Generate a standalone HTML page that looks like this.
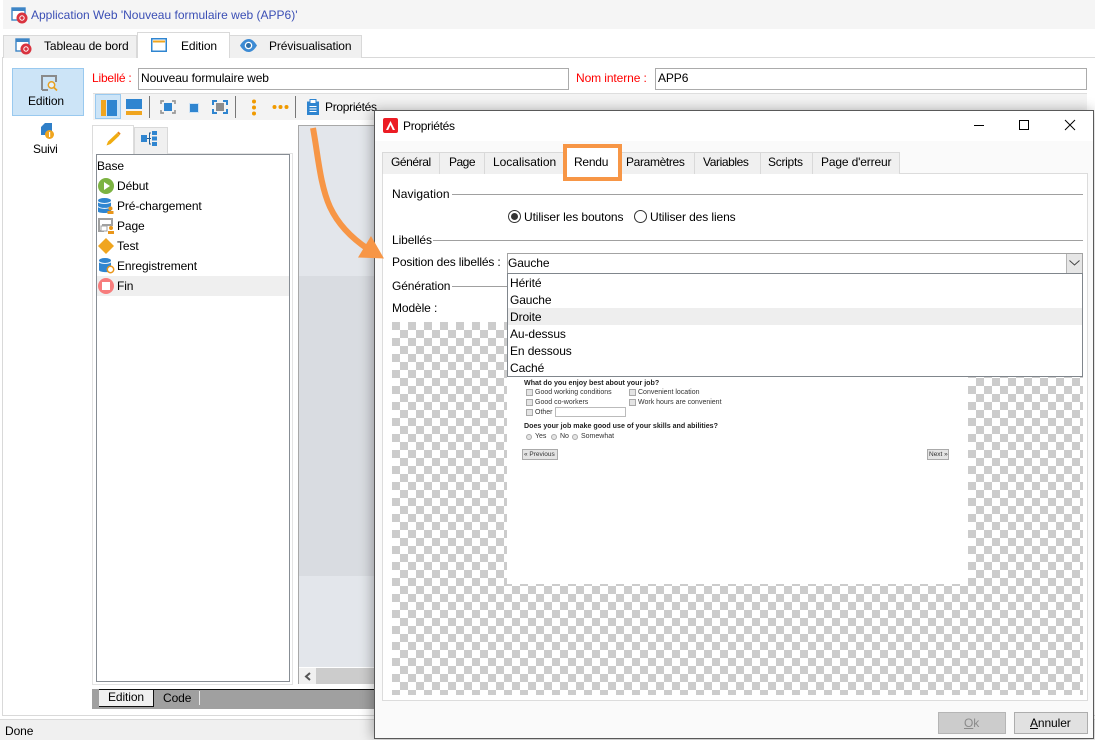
<!DOCTYPE html>
<html><head><meta charset="utf-8"><style>
*{box-sizing:border-box}
html,body{margin:0;padding:0;width:1095px;height:740px;overflow:hidden;background:#fff;font-family:"Liberation Sans",sans-serif;font-size:12px;color:#000}
.a{position:absolute}
.t{position:absolute;white-space:nowrap;line-height:16px;height:16px;letter-spacing:-.1px}
.tab{position:absolute;background:#f0f0f0;border:1px solid #d9d9d9;border-bottom:none}
.g{position:absolute;background:#a0a0a0;height:1px}
svg{position:absolute;overflow:visible}
.p{position:absolute;white-space:nowrap;font-size:7px;line-height:8px;color:#333;font-weight:400}
.b{font-weight:700;font-size:7.1px;letter-spacing:0;color:#222}
.cb{position:absolute;width:7px;height:7px;background:#e4e4e4;border:1px solid #aaa}
.rd{position:absolute;width:6px;height:6px;border-radius:50%;background:#e4e4e4;border:1px solid #aaa}
</style></head><body>

<!-- title -->
<div class="a" style="left:3px;top:0;width:1092px;height:29px;background:#f5f5f5"></div>
<svg style="left:11px;top:7px" width="17" height="16"><rect x="1" y="1" width="13" height="12" fill="#fff" stroke="#3d85c6" stroke-width="1.4"/><rect x="1" y="1" width="13" height="3" fill="#3d85c6"/><circle cx="11" cy="11" r="5.500" fill="#d9333f"/><circle cx="11" cy="11" r="2.200" fill="none" stroke="#fff"/></svg>
<div class="t" style="left:31px;top:7px;color:#3b4fb5;letter-spacing:0">Application Web 'Nouveau formulaire web (APP6)'</div>

<!-- main panel -->
<div class="a" style="left:2px;top:57px;width:1093px;height:659px;background:#fff;border:1px solid #d9d9d9;border-right:none"></div>

<!-- top tabs -->
<div class="tab" style="left:3px;top:35px;width:134px;height:23px"></div>
<div class="tab" style="left:229px;top:35px;width:133px;height:23px"></div>
<div class="tab" style="left:137px;top:32px;width:93px;height:26px;background:#fff"></div>
<svg style="left:15px;top:38px" width="17" height="16"><rect x="1" y="1" width="13" height="12" fill="#fff" stroke="#3d85c6" stroke-width="1.4"/><rect x="1" y="1" width="13" height="3" fill="#3d85c6"/><circle cx="11" cy="11" r="5.500" fill="#d9333f"/><circle cx="11" cy="11" r="2.200" fill="none" stroke="#fff"/></svg>
<div class="t" style="left:44px;top:38px">Tableau de bord</div>
<svg style="left:151px;top:38px" width="16" height="15"><rect x=".75" y=".75" width="14.5" height="12.5" fill="#fff" stroke="#2f85d0" stroke-width="1.5"/><rect x="2" y="2.500" width="12" height="2" fill="#f0a51e"/></svg>
<div class="t" style="left:181px;top:38px">Edition</div>
<svg style="left:240px;top:39px" width="17" height="13"><path d="M0 6.500C3 1.500 6 0 8.500 0S14 1.500 17 6.500C14 11.500 11 13 8.500 13S3 11.500 0 6.500Z" fill="#3d8bd4"/><circle cx="8.500" cy="6.500" r="3.800" fill="#fff"/><circle cx="8.500" cy="6.500" r="2.500" fill="#2f6fa8"/></svg>
<div class="t" style="left:269px;top:38px">Prévisualisation</div>

<!-- sidebar -->
<div class="a" style="left:12px;top:68px;width:72px;height:48px;background:#cce4f7;border:1px solid #99c9ef"></div>
<svg style="left:41px;top:75px" width="17" height="17"><path d="M1 15V1H15V7M1 15H7" fill="none" stroke="#8a8a8a" stroke-width="2"/><circle cx="10.500" cy="10" r="3.200" fill="#e6f1fa" stroke="#e8a020" stroke-width="1.500"/><path d="M13 12.500L16 15.500" stroke="#e8a020" stroke-width="1.800"/></svg>
<div class="t" style="left:28px;top:93px">Edition</div>
<svg style="left:40px;top:122px" width="15" height="17"><path d="M1 5L5 1H12V13H1Z" fill="#2f7fc8"/><circle cx="9.500" cy="12.500" r="4.500" fill="#f0a51e"/><rect x="9" y="10" width="1.200" height="5" fill="#fff"/></svg>
<div class="t" style="left:33px;top:141px;letter-spacing:-.3px">Suivi</div>

<!-- labels -->
<div class="t" style="left:92px;top:70px;color:#f00;letter-spacing:-.2px">Libellé :</div>
<div class="a" style="left:138px;top:68px;width:431px;height:22px;background:#fff;border:1px solid #ababab"></div>
<div class="t" style="left:141px;top:70px">Nouveau formulaire web</div>
<div class="t" style="left:576px;top:70px;color:#f00">Nom interne :</div>
<div class="a" style="left:655px;top:68px;width:432px;height:22px;background:#fff;border:1px solid #ababab"></div>
<div class="t" style="left:658px;top:70px">APP6</div>

<!-- toolbar -->
<div class="a" style="left:93px;top:93px;width:994px;height:27px;background:#f3f3f3;border-top:1px solid #dedede"></div>
<div class="a" style="left:95px;top:94px;width:26px;height:25px;background:#cce4f7;border:1px solid #99c9ef"></div>
<div class="a" style="left:101px;top:100px;width:5px;height:16px;background:#f0a51e"></div>
<div class="a" style="left:107px;top:100px;width:10px;height:16px;background:#2f85d0"></div>
<div class="a" style="left:126px;top:99px;width:16px;height:10px;background:#2f85d0"></div>
<div class="a" style="left:126px;top:111px;width:16px;height:4px;background:#f0a51e"></div>
<div class="a" style="left:149px;top:96px;width:1px;height:22px;background:#777"></div>
<svg style="left:160px;top:100px" width="16" height="14"><path d="M1 4V1H4M12 1H15V4M15 10V13H12M4 13H1V10" fill="none" stroke="#999" stroke-width="1.700"/><rect x="4" y="3" width="8" height="8" fill="#2f85d0"/></svg>
<div class="a" style="left:189px;top:103px;width:10px;height:10px;background:#cfe3f5"></div>
<div class="a" style="left:190px;top:104px;width:8px;height:8px;background:#2f85d0"></div>
<svg style="left:212px;top:100px" width="16" height="14"><path d="M1 5V1H5M11 1H15V5M15 9V13H11M5 13H1V9" fill="none" stroke="#2f85d0" stroke-width="2"/><rect x="4" y="3" width="8" height="8" fill="#8c8c8c"/></svg>
<div class="a" style="left:235px;top:96px;width:1px;height:22px;background:#777"></div>
<svg style="left:250px;top:99px" width="8" height="17"><circle cx="4" cy="2.500" r="2" fill="#f09a00"/><circle cx="4" cy="8.500" r="2" fill="#f09a00"/><circle cx="4" cy="14.500" r="2" fill="#f09a00"/></svg>
<svg style="left:272px;top:103px" width="17" height="8"><circle cx="2.500" cy="4" r="2" fill="#f09a00"/><circle cx="8.500" cy="4" r="2" fill="#f09a00"/><circle cx="14.500" cy="4" r="2" fill="#f09a00"/></svg>
<div class="a" style="left:295px;top:96px;width:1px;height:22px;background:#777"></div>
<svg style="left:307px;top:99px" width="12" height="16"><rect x="0" y="2.500" width="12" height="13.500" fill="#2f85d0"/><rect x="3" y=".5" width="6" height="4" fill="#fff" stroke="#2f85d0"/><path d="M2.500 7.500H9.500M2.500 10H9.500M2.500 12.500H9.500" stroke="#fff"/></svg>
<div class="t" style="left:325px;top:99px;letter-spacing:-.3px">Propriétés</div>

<!-- left tabs -->
<div class="a" style="left:92px;top:153px;width:201px;height:532px;border:1px solid #e3e3e3;background:#fff"></div>
<div class="tab" style="left:134px;top:127px;width:34px;height:27px"></div>
<div class="tab" style="left:92px;top:125px;width:42px;height:29px;background:#fff;border-color:#dcdcdc"></div>
<svg style="left:106px;top:131px" width="15" height="15"><path d="M.5 14.500L2 10.500L11 2L13.500 4.500L4.500 13Z" fill="#f0ac10"/><path d="M11.800 1.200L14 3.400" stroke="#e8851a" stroke-width="2"/></svg>
<svg style="left:141px;top:131px" width="17" height="16"><rect x="0" y="4" width="6" height="7" fill="#2f85d0"/><path d="M6 7.500H10M10 2H8.500V13H10" stroke="#235e94" fill="none"/><rect x="11" y="0" width="5" height="4" fill="#2f85d0"/><rect x="11" y="5.500" width="5" height="4" fill="#2f85d0"/><rect x="11" y="11" width="5" height="4" fill="#2f85d0"/></svg>
<div class="a" style="left:96px;top:154px;width:194px;height:528px;background:#fff;border:1px solid #878d94"></div>
<div class="a" style="left:97px;top:276px;width:192px;height:20px;background:#efefef"></div>
<div class="t" style="left:97px;top:158px">Base</div>
<svg style="left:98px;top:178px" width="16" height="16"><circle cx="8" cy="8" r="8" fill="#7cb342"/><path d="M6 4L12 8L6 12Z" fill="#fff"/></svg>
<div class="t" style="left:117px;top:178px">Début</div>
<svg style="left:98px;top:198px" width="16" height="16"><ellipse cx="6.500" cy="2.500" rx="6.500" ry="2.500" fill="#2f85d0"/><path d="M0 4V13.500C0 15.500 13 15.500 13 13.500V4C13 6.500 0 6.500 0 4Z" fill="#2f85d0"/><path d="M0 8.500C2 11 11 11 13 8.500" stroke="#fff" fill="none"/><circle cx="12.500" cy="10.500" r="2" fill="#e9961a"/><rect x="9.500" y="13" width="6" height="3" fill="#e9961a"/></svg>
<div class="t" style="left:117px;top:198px">Pré-chargement</div>
<svg style="left:98px;top:218px" width="16" height="16"><path d="M1 13V1H14V7H5V13Z" fill="#fff" stroke="#a0a0a0" stroke-width="2"/><rect x="3" y="8" width="6" height="5" fill="#fff" stroke="#a0a0a0"/><circle cx="13" cy="10" r="2" fill="#e9961a"/><rect x="10" y="13" width="6" height="3" fill="#e9961a"/></svg>
<div class="t" style="left:117px;top:218px">Page</div>
<svg style="left:98px;top:238px" width="16" height="16"><path d="M8 0L16 8L8 16L0 8Z" fill="#f0a51e"/></svg>
<div class="t" style="left:117px;top:238px">Test</div>
<svg style="left:99px;top:258px" width="16" height="16"><ellipse cx="6" cy="2.500" rx="6" ry="2.500" fill="#2f85d0"/><path d="M0 4V12C0 14 7 14.500 9 14V9H12V4C12 6.500 0 6.500 0 4Z" fill="#2f85d0"/><circle cx="11.500" cy="11.500" r="3.200" fill="#fff" stroke="#e9961a" stroke-width="1.500"/></svg>
<div class="t" style="left:117px;top:258px">Enregistrement</div>
<svg style="left:98px;top:278px" width="16" height="16"><circle cx="8" cy="8" r="8" fill="#f77c7c"/><rect x="4" y="4" width="8" height="8" fill="#fff"/></svg>
<div class="t" style="left:117px;top:278px">Fin</div>

<!-- right panel -->
<div class="a" style="left:298px;top:125px;width:80px;height:559px;background:#e3e6eb;border:1px solid #a8a8a8"></div>
<div class="a" style="left:299px;top:276px;width:78px;height:300px;background:#d9dce1"></div>
<div class="a" style="left:299px;top:667px;width:78px;height:17px;background:#ccc;border-top:1px solid #fff"></div>
<div class="a" style="left:299px;top:668px;width:17px;height:16px;background:#f0f0f0"></div>
<svg style="left:304px;top:672px" width="8" height="9"><path d="M6 1L2 4.500L6 8" fill="none" stroke="#555" stroke-width="2"/></svg>

<!-- bottom tabs -->
<div class="a" style="left:92px;top:689px;width:290px;height:20px;background:#a0a0a0"></div>
<div class="a" style="left:99px;top:689px;width:283px;height:1px;background:#111"></div>
<div class="a" style="left:99px;top:690px;width:55px;height:17px;background:#f0f0f0;border-bottom:1px solid #111;border-right:1px solid #111"></div>
<div class="t" style="left:108px;top:689px">Edition</div>
<div class="t" style="left:163px;top:690px">Code</div>
<div class="a" style="left:199px;top:691px;width:1px;height:14px;background:#e8e8e8"></div>

<!-- status -->
<div class="a" style="left:0;top:719px;width:1095px;height:21px;background:#f0f0f0;border-top:1px solid #dadada"></div>
<div class="t" style="left:5px;top:723px">Done</div>

<!-- dialog -->
<div class="a" style="left:374px;top:110px;width:720px;height:629px;background:#fff;border:1px solid #595959;box-shadow:-2px 0 12px rgba(0,0,0,.3)"></div>
<div class="a" style="left:375px;top:141px;width:718px;height:597px;background:#fafafa"></div>
<svg style="left:383px;top:118px" width="15" height="15"><rect width="15" height="15" rx="2" fill="#ec1c24"/><path d="M7.500 3L12 12H9.800L7.500 7L5.200 12H3Z" fill="#fff"/></svg>
<div class="t" style="left:403px;top:118px;letter-spacing:-.3px">Propriétés</div>
<div class="a" style="left:974px;top:125px;width:10px;height:1px;background:#000"></div>
<div class="a" style="left:1019px;top:120px;width:10px;height:10px;border:1px solid #000"></div>
<svg style="left:1065px;top:120px" width="10" height="10"><path d="M0 0L10 10M10 0L0 10" stroke="#000" stroke-width="1"/></svg>

<!-- dialog tabs -->
<div class="a" style="left:382px;top:173px;width:706px;height:528px;background:#fff;border:1px solid #dcdcdc"></div>
<div class="tab" style="left:382px;top:152px;width:58px;height:22px"></div>
<div class="tab" style="left:439px;top:152px;width:46px;height:22px"></div>
<div class="tab" style="left:484px;top:152px;width:81px;height:22px"></div>
<div class="tab" style="left:620px;top:152px;width:75px;height:22px"></div>
<div class="tab" style="left:694px;top:152px;width:67px;height:22px"></div>
<div class="tab" style="left:760px;top:152px;width:53px;height:22px"></div>
<div class="tab" style="left:812px;top:152px;width:88px;height:22px"></div>
<div class="a" style="left:565px;top:148px;width:55px;height:26px;background:#fff"></div>
<div class="a" style="left:563px;top:144px;width:59px;height:37px;border:4px solid #f79646"></div>
<div class="t" style="left:391px;top:154px;letter-spacing:-.42px">Général</div>
<div class="t" style="left:449px;top:154px;letter-spacing:-.5px">Page</div>
<div class="t" style="left:493px;top:154px;letter-spacing:-.02px">Localisation</div>
<div class="t" style="left:574px;top:154px;letter-spacing:-.25px">Rendu</div>
<div class="t" style="left:626px;top:154px;letter-spacing:-.35px">Paramètres</div>
<div class="t" style="left:703px;top:154px;letter-spacing:-.4px">Variables</div>
<div class="t" style="left:768px;top:154px;letter-spacing:-.28px">Scripts</div>
<div class="t" style="left:821px;top:154px;letter-spacing:-.15px">Page d'erreur</div>

<!-- form -->
<div class="t" style="left:392px;top:186px;letter-spacing:.1px">Navigation</div><div class="g" style="left:452px;top:194px;width:631px"></div>
<svg style="left:508px;top:210px" width="13" height="13"><circle cx="6.500" cy="6.500" r="6" fill="#fff" stroke="#333"/><circle cx="6.500" cy="6.500" r="3.500" fill="#333"/></svg>
<div class="t" style="left:524px;top:209px;letter-spacing:-.1px">Utiliser les boutons</div>
<svg style="left:634px;top:210px" width="13" height="13"><circle cx="6.500" cy="6.500" r="6" fill="#fff" stroke="#333"/></svg>
<div class="t" style="left:650px;top:209px">Utiliser des liens</div>
<div class="t" style="left:392px;top:232px">Libellés</div><div class="g" style="left:433px;top:240px;width:650px"></div>
<div class="t" style="left:392px;top:254px;letter-spacing:-.15px">Position des libellés :</div>
<div class="t" style="left:392px;top:278px">Génération</div><div class="g" style="left:452px;top:286px;width:60px"></div>
<div class="t" style="left:392px;top:300px">Modèle :</div>

<!-- checker -->
<div class="a" style="left:392px;top:322px;width:691px;height:373px;background:repeating-conic-gradient(#ccc 0 25%,#fff 0 50%) 8px 0/16px 16px"></div>
<div class="a" style="left:507px;top:320px;width:461px;height:264px;background:#fff"></div>

<!-- preview -->
<div class="p b" style="left:524px;top:379px">What do you enjoy best about your job?</div>
<div class="cb" style="left:526px;top:389px"></div><div class="p" style="left:535px;top:389px">Good working conditions</div>
<div class="cb" style="left:629px;top:389px"></div><div class="p" style="left:638px;top:389px">Convenient location</div>
<div class="cb" style="left:526px;top:399px"></div><div class="p" style="left:535px;top:399px">Good co-workers</div>
<div class="cb" style="left:629px;top:399px"></div><div class="p" style="left:638px;top:399px">Work hours are convenient</div>
<div class="cb" style="left:526px;top:409px"></div><div class="p" style="left:535px;top:409px">Other</div>
<div class="a" style="left:555px;top:407px;width:71px;height:10px;background:#fff;border:1px solid #bbb"></div>
<div class="p b" style="left:524px;top:422px">Does your job make good use of your skills and abilities?</div>
<div class="rd" style="left:526px;top:434px"></div><div class="p" style="left:535px;top:433px">Yes</div>
<div class="rd" style="left:551px;top:434px"></div><div class="p" style="left:560px;top:433px">No</div>
<div class="rd" style="left:572px;top:434px"></div><div class="p" style="left:581px;top:433px">Somewhat</div>
<div class="a" style="left:522px;top:449px;width:36px;height:11px;background:#e4e4e4;border:1px solid #aaa"></div>
<div class="p" style="left:524px;top:451px;font-size:6.500px">« Previous</div>
<div class="a" style="left:927px;top:449px;width:22px;height:11px;background:#e4e4e4;border:1px solid #aaa"></div>
<div class="p" style="left:929px;top:451px;font-size:6.500px">Next »</div>

<!-- combo -->
<div class="a" style="left:507px;top:253px;width:576px;height:21px;background:#fff;border:1px solid #a3a3a3"></div>
<div class="a" style="left:1066px;top:254px;width:16px;height:19px;background:#e6e6e6;border-left:1px solid #b5b5b5"></div>
<svg style="left:1069px;top:260px" width="11" height="6"><path d="M.5 .5L5.500 5L10.500 .5" fill="none" stroke="#444"/></svg>
<div class="t" style="left:508px;top:255px">Gauche</div>
<div class="a" style="left:507px;top:273px;width:576px;height:104px;background:#fff;border:1px solid #80868c"></div>
<div class="a" style="left:508px;top:308px;width:574px;height:17px;background:#eee"></div>
<div class="t" style="left:510px;top:275px">Hérité</div>
<div class="t" style="left:510px;top:292px">Gauche</div>
<div class="t" style="left:510px;top:309px">Droite</div>
<div class="t" style="left:510px;top:326px">Au-dessus</div>
<div class="t" style="left:510px;top:343px">En dessous</div>
<div class="t" style="left:510px;top:360px">Caché</div>

<!-- buttons -->
<div class="a" style="left:938px;top:712px;width:68px;height:22px;background:#ccc;border:1px solid #b5b5b5"></div>
<div class="t" style="left:964px;top:715px;color:#8a8a8a"><u>O</u>k</div>
<div class="a" style="left:1014px;top:712px;width:74px;height:22px;background:#e1e1e1;border:1px solid #adadad"></div>
<div class="t" style="left:1030px;top:715px"><u>A</u>nnuler</div>

<!-- arrow -->
<svg style="left:0;top:0" width="1095" height="740"><path d="M313 128C318 155 320 185 330 207C337 222 350 237 368 249" fill="none" stroke="#f79646" stroke-width="6"/><path d="M371 236L358 257.500L384 258.500Z" fill="#f79646"/></svg>
</body></html>
